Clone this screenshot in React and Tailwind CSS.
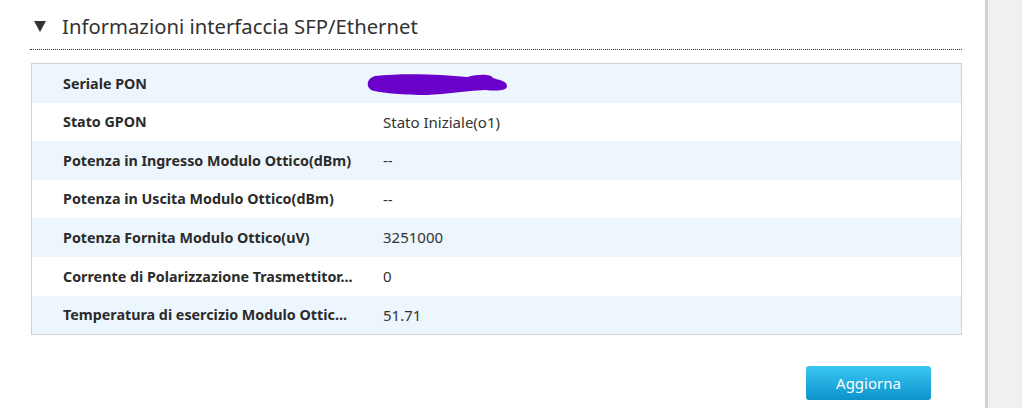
const rows = [
  { label: "Seriale PON", value: null },
  { label: "Stato GPON", value: "Stato Iniziale(o1)" },
  { label: "Potenza in Ingresso Modulo Ottico(dBm)", value: "--" },
  { label: "Potenza in Uscita Modulo Ottico(dBm)", value: "--" },
  { label: "Potenza Fornita Modulo Ottico(uV)", value: "3251000" },
  // shown already shortened, like the device page does
  { label: "Corrente di Polarizzazione Trasmettitor...", value: "0" },
  { label: "Temperatura di esercizio Modulo Ottic...", value: "51.71" },
];

function Scribble() {
  return (
    <svg width="146" height="24" viewBox="0 0 146 24" className="block">
      <path
        d="M10 4 C 35 1, 75 2, 102 5 C 114 2, 126 2, 128 6 C 134 8, 142 9, 142 14 C 142 19, 132 19, 120 18 C 100 19, 82 22, 62 23 C 40 23, 18 21, 9 19 C 1 17, 0 7, 10 4 Z"
        fill="#6a00c9"
      />
    </svg>
  );
}

export default function App() {
  return (
    <div
      className="flex w-[1022px] h-[408px] overflow-hidden bg-white text-[#333]"
      style={{ fontFamily: '"Noto Sans", "Open Sans", sans-serif' }}
    >
      <div className="w-[985px] shrink-0 pl-[30px] pr-[23px]">
        {/* section title */}
        <div className="flex items-center h-[49px] pt-[4px]">
          <span className="ml-[4px] w-0 h-0 border-l-[6px] border-r-[6px] border-t-[11px] border-l-transparent border-r-transparent border-t-[#333]" />
          <span className="ml-[16px] text-[20.3px] leading-none text-[#333]">
            Informazioni interfaccia SFP/Ethernet
          </span>
        </div>
        <div className="border-t border-dotted border-[#333] w-[932px]" />

        {/* table */}
        <div className="mt-[13px] ml-[1px] w-[931px] border border-[#d2d2d2]">
          {rows.map((r, i) => (
            <div
              key={r.label}
              className={`flex items-center h-[38.6px] ${i % 2 === 0 ? "bg-[#eef6fd]" : "bg-white"}`}
            >
              <div className="w-[351px] shrink-0 pl-[31px] pr-[8px] text-[14.3px] font-bold whitespace-nowrap text-[#2b2b2b]">
                {r.label}
              </div>
              <div className="text-[15px] text-[#333]">
                {r.value === null ? (
                  <div className="-ml-[18px] mt-[2px]">
                    <Scribble />
                  </div>
                ) : (
                  r.value
                )}
              </div>
            </div>
          ))}
        </div>

        <div className="flex justify-end mt-[31px] pr-[31px]">
          <button className="w-[125px] h-[34px] rounded-[3px] bg-gradient-to-b from-[#38c6f4] to-[#0a93cb] text-white text-[15px]">
            Aggiorna
          </button>
        </div>
      </div>
      <div className="w-[3px] bg-[#d3d3d3]" />
      <div className="flex-1 bg-[#f0f0f0]" />
    </div>
  );
}
